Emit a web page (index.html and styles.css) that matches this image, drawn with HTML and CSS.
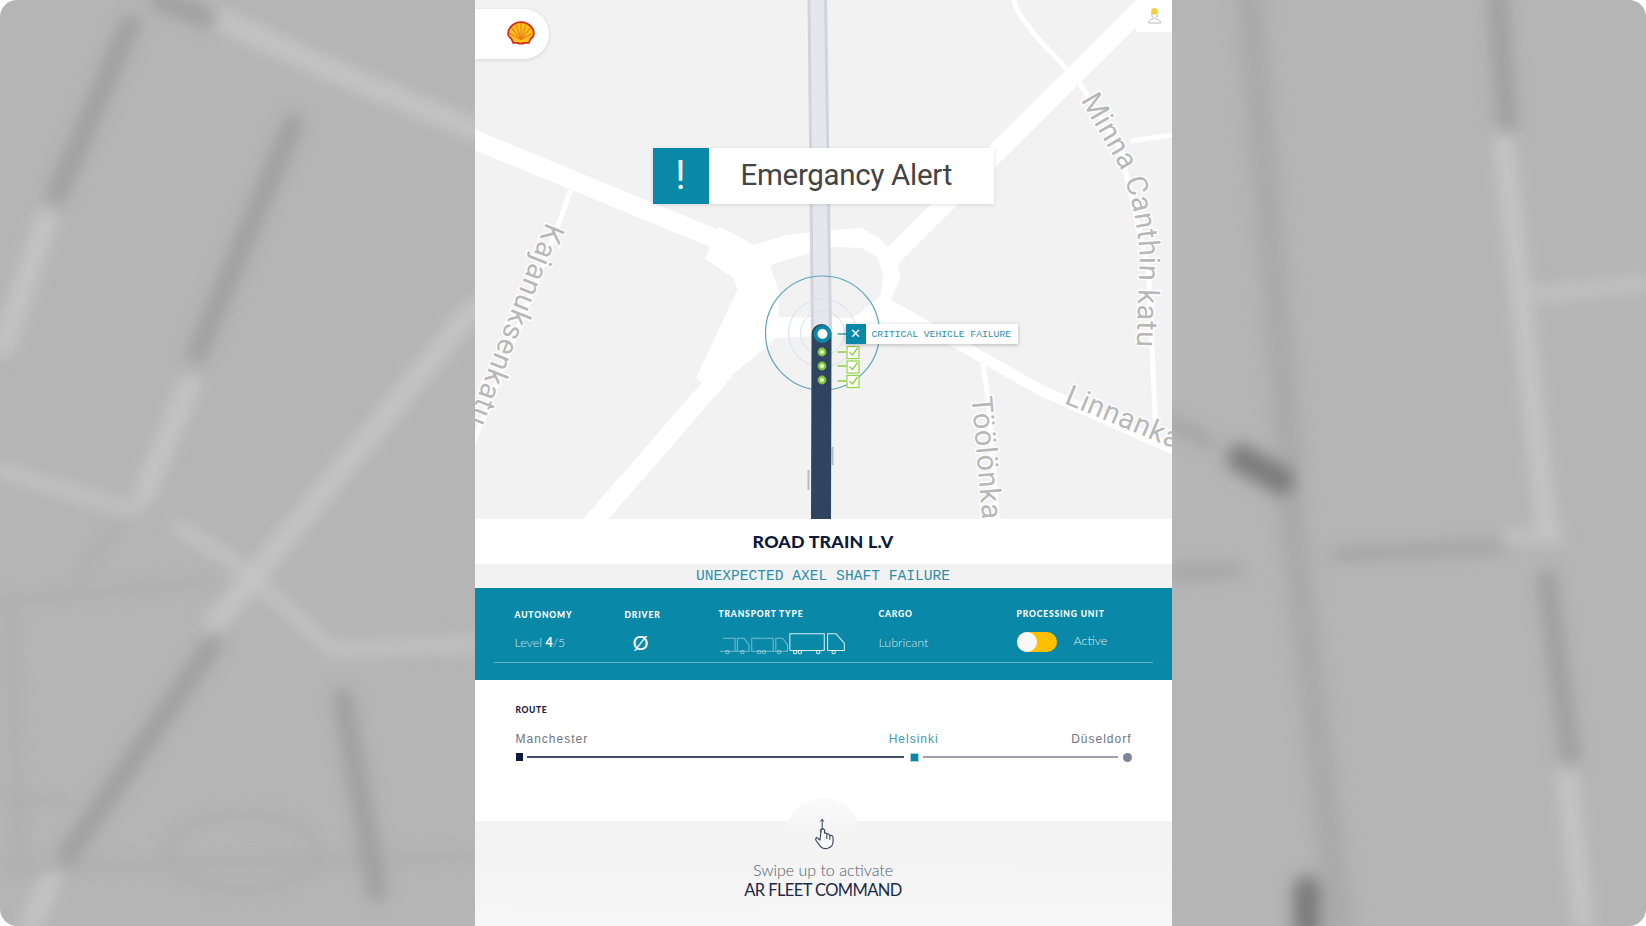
FILE: index.html
```html
<!DOCTYPE html>
<html lang="en">
<head>
    <meta charset="UTF-8">
    <meta name="viewport" content="width=device-width, initial-scale=1.0">
    <title>Road Train Alert</title>
    <link rel="stylesheet" href="styles.css">
</head>
<body>
    <!-- blurred map behind the phone panel -->
    <svg class="backdrop" viewBox="0 0 1646 926" aria-hidden="true">
        <g class="bg-light">
            <path d="M217 18 L333 71 L475 130"/>
            <path d="M47 218 L3 348"/>
            <path d="M190 384 L143 496"/>
            <path class="thin" d="M0 470 L133 511"/>
            <path d="M475 307 L213 626"/>
            <path class="thin" d="M177 526 L233 561 L333 650 L475 644"/>
            <path d="M53 874 L30 926"/>
            <path d="M1503 136 L1547 532"/>
            <path class="thin" d="M1537 295 L1646 283"/>
            <path class="thin" d="M1503 537 L1560 537"/>
            <path d="M1567 774 L1583 921"/>
        </g>
        <g class="bg-faint">
            <path d="M0 602 L207 582"/>
            <path d="M117 526 L77 579"/>
            <path d="M10 608 L20 862"/>
            <path d="M0 868 L475 856"/>
            <ellipse cx="243" cy="852" rx="75" ry="38"/>
            <path d="M0 800 L60 800"/>
            <path class="wide" d="M1250 0 L1290 460"/>
            <path class="wide" d="M1290 500 L1340 926"/>
        </g>
        <g class="bg-dark">
            <path d="M160 0 L207 18"/>
            <path d="M130 24 L57 195"/>
            <path d="M293 124 L197 354"/>
            <path d="M213 644 L67 856"/>
            <path d="M343 697 L377 892"/>
            <path d="M1498 0 L1507 124"/>
            <path d="M1547 579 L1570 756"/>
            <path class="thin" d="M1337 555 L1500 546"/>
            <path class="thin" d="M1172 573 L1237 570"/>
            <path class="thin" d="M1172 422 L1210 443"/>
        </g>
        <path class="bg-truck" d="M1241 458 L1282 481"/>
        <path class="bg-truck" d="M1307 890 L1307 926"/>
    </svg>

    <main class="panel">
        <section class="map">
            <svg class="map-art" viewBox="474.5 0 697 519" aria-hidden="true">
                <g class="road">
                    <path d="M470 138 L725 243"/>
                    <path d="M887 261 L1139 10 L1180 -30"/>
                    <path d="M725 370 L590 525"/>
                </g>
                <path class="road-fill" d="M720 229 L753 247 L787 237 L833 232 L860 230 L878 240 L895 260 L898 277 L888 300 L918 325 L913 343 L860 340 L840 333 L775 336 L753 355 L710 390 L698 377 L739 290 L735 277 L707 258 Z"/>
                <path class="island" d="M773 267 L810 256 L833 250 L861 251 L874 259 L880 277 L877 295 L861 308 L851 315 L781 314 L781 290 Z"/>
                <g class="road-thin">
                    <path d="M1013 0 L1018 13 L1036 37 L1077 80 L1120 150 L1148 270 L1155 425"/>
                    <path d="M1172 135 L1130 141"/>
                    <path d="M570 190 L556 230 L470 450"/>
                    <path d="M982 363 L988 400 L997 525"/>
                </g>
                <path class="road-mid" d="M892 307 L1040 390 L1180 452"/>

                <path id="minnaPath" class="guide" d="M1080 100 L1118 165 C1134 200 1139 240 1139 262 L1135 380"/>
                <path id="kajaPath" class="guide" d="M546 222 C520 285 490 365 440 490"/>
                <path id="toolonPath" class="guide" d="M971 397 L988 590"/>
                <path id="linnanPath" class="guide" d="M1063 403 L1230 472"/>
                <text class="street"><textPath href="#minnaPath">Minna Canthin katu</textPath></text>
                <text class="street"><textPath href="#kajaPath">Kajanuksenkatu</textPath></text>
                <text class="street"><textPath href="#toolonPath">Töölönkatu</textPath></text>
                <text class="street"><textPath href="#linnanPath">Linnankatu</textPath></text>
                <path class="label-bit" d="M808 470 L808 490 M832 447 L832 465 M812 505 L812 518"/>

                <!-- route track -->
                <polygon class="track" points="807.5,0 826,0 831,334 811,334"/>
                <path class="track-edge" d="M808.5 0 L812 334 M825 0 L830 334"/>
                <circle class="radar" cx="822" cy="333" r="57"/>
                <circle class="radar-faint" cx="822" cy="333" r="34"/>
                <circle class="radar-faint" cx="822" cy="333" r="22"/>
                <path class="track-done" d="M811 334 A10 10 0 0 1 831 334 L830.5 519 L810.5 519 Z"/>
                <circle class="stop-main" cx="822" cy="334" r="7"/>
                <g class="stop-ok">
                    <circle cx="821.5" cy="352" r="3.2"/>
                    <circle cx="821.5" cy="366" r="3.2"/>
                    <circle cx="821.5" cy="380" r="3.2"/>
                </g>
                <path class="link-alert" d="M837 334 L846 334"/>
                <g class="link-ok">
                    <path d="M837 352 L846 352 M837 366 L846 366 M837 381 L846 381"/>
                    <rect x="846.5" y="346.5" width="12" height="12"/>
                    <rect x="846.5" y="361" width="12" height="12"/>
                    <rect x="846.5" y="375.5" width="12" height="12"/>
                    <path d="M849 352 L852 355 L857 348 M849 366.5 L852 369.5 L857 362.5 M849 381 L852 384 L857 377"/>
                </g>
            </svg>

            <div class="brand-tab">
                <svg class="shell-logo" viewBox="0 0 27 23" aria-label="Shell">
                    <path class="shell-body" d="M13.5 1 C6.5 1 1 6.5 1 12.5 C1 15 3 16 4.2 17 L6 21 L10 21 Q13.5 22.6 17 21 L21 21 L22.8 17 C24 16 26 15 26 12.5 C26 6.5 20.5 1 13.5 1 Z"/>
                    <path class="shell-rays" d="M13.5 18 L13.5 2 M13.5 18 L8.5 3 M13.5 18 L18.5 3 M13.5 18 L4.5 6.5 M13.5 18 L22.5 6.5 M13.5 18 L2 11.5 M13.5 18 L25 11.5"/>
                </svg>
            </div>

            <div class="user-tab">
                <svg class="user-icon" viewBox="0 0 16 18" aria-label="Driver">
                    <path class="user-outline" d="M5 8 Q5.5 11 7 11.5 L7 12.5 Q1.5 13.5 1.5 17 L14.5 17 Q14.5 13.5 9 12.5 L9 11.5 Q10.5 11 11 8"/>
                    <path class="user-helmet" d="M4.5 8 L4.5 5 Q4.5 1 8 1 Q11.5 1 11.5 5 L11.5 8 Z"/>
                </svg>
            </div>

            <div class="alert">
                <span class="alert-mark">!</span>
                <span class="alert-text">Emergancy Alert</span>
            </div>

            <div class="failure-tag">
                <span class="failure-mark">✕</span>
                <span class="failure-text">CRITICAL VEHICLE FAILURE</span>
            </div>
        </section>

        <header class="vehicle-name">ROAD TRAIN L.V</header>
        <div class="vehicle-status">UNEXPECTED AXEL SHAFT FAILURE</div>

        <section class="specs">
            <div class="specs-row">
                <div class="spec spec-autonomy">
                    <h2>AUTONOMY</h2>
                    <p>Level <b>4</b>/5</p>
                </div>
                <div class="spec spec-driver">
                    <h2>DRIVER</h2>
                    <p class="no-driver">Ø</p>
                </div>
                <div class="spec spec-transport">
                    <h2>TRANSPORT TYPE</h2>
                    <svg class="trucks" viewBox="60 95 380 68" aria-label="Road train">
                        <g class="truck-dim">
                            <path d="M62 152 L152 152 M72 113 L108 113 L108 152 M115 152 L115 113 L135 113 L150 133 L150 152"/>
                            <circle cx="85" cy="155" r="5"/>
                            <circle cx="130" cy="155" r="5"/>
                            <path d="M158 152 L158 113 L222 113 L222 152 Z M230 152 L230 113 L250 113 L265 133 L265 152 L158 152"/>
                            <circle cx="180" cy="155" r="5"/>
                            <circle cx="195" cy="155" r="5"/>
                            <circle cx="240" cy="155" r="5"/>
                        </g>
                        <g class="truck-main">
                            <path d="M272 150 L272 100 L375 100 L375 150 L272 150 M385 150 L385 100 L410 100 L435 128 L435 150 L385 150"/>
                            <circle cx="288" cy="155" r="5"/>
                            <circle cx="302" cy="155" r="5"/>
                            <circle cx="357" cy="155" r="5"/>
                            <circle cx="403" cy="155" r="5"/>
                        </g>
                    </svg>
                </div>
                <div class="spec spec-cargo">
                    <h2>CARGO</h2>
                    <p>Lubricant</p>
                </div>
                <div class="spec spec-unit">
                    <h2>PROCESSING UNIT</h2>
                    <div class="unit-state">
                        <span class="toggle"><span class="toggle-knob"></span></span>
                        <span class="unit-label">Active</span>
                    </div>
                </div>
            </div>
        </section>

        <section class="route">
            <h2>ROUTE</h2>
            <div class="route-cities">
                <span class="city">Manchester</span>
                <span class="city city-current">Helsinki</span>
                <span class="city">Düseldorf</span>
            </div>
            <div class="route-line">
                <span class="node node-start"></span>
                <span class="leg leg-done"></span>
                <span class="node node-current"></span>
                <span class="leg leg-next"></span>
                <span class="node node-end"></span>
            </div>
        </section>

        <footer class="swipe">
            <svg class="swipe-icon" viewBox="100 80 70 100" aria-hidden="true">
                <path class="swipe-arrow" d="M125 116 L125 90 M120 94 L125 86 L130 94"/>
                <circle class="swipe-ring" cx="126" cy="122" r="7"/>
                <path class="swipe-hand" d="M118 150 L108 142 Q102 146 108 154 L122 172 Q130 178 142 175 Q158 170 158 155 L158 141 Q155 133 148 137 Q146 129 139 132 Q137 126 132 129 L132 120 Q128 113 122 119 Z M139 132 L139 147 M148 137 L148 149"/>
            </svg>
            <p class="swipe-hint">Swipe up to activate</p>
            <p class="swipe-title">AR FLEET COMMAND</p>
        </footer>
    </main>
</body>
</html>
```

FILE: styles.css
```css
html, body {
    height: 100%;
    margin: 0;
    background-color: #fff;
    overflow: hidden;
}
body {
    display: flex;
    justify-content: center;
    font-family: "Lato", "Liberation Sans", sans-serif;
}
h2, p {
    margin: 0;
}

/* blurred backdrop */
.backdrop {
    position: absolute;
    left: 0;
    top: 0;
    width: 1646px;
    height: 926px;
    background-color: #b5b5b5;
    border-radius: 17px;
}
.backdrop g, .bg-truck {
    fill: none;
    stroke-linecap: round;
    filter: blur(8px);
}
.bg-light {
    stroke: #c6c6c6;
    stroke-width: 19;
}
.bg-light .thin {
    stroke-width: 11;
}
.bg-faint {
    stroke: #aaa;
    stroke-width: 6;
}
.bg-faint .wide {
    stroke-width: 28;
}
.bg-dark {
    stroke: #9e9e9e;
    stroke-width: 19;
}
.bg-dark .thin {
    stroke-width: 10;
}
.bg-truck {
    stroke: #7c7c7c;
    stroke-width: 28;
}

/* phone panel */
.panel {
    position: relative;
    width: 697px;
    height: 926px;
    background-color: #fff;
    display: flex;
    flex-direction: column;
}

/* map */
.map {
    position: relative;
    height: 519px;
    background-color: #f2f2f2;
    overflow: hidden;
}
.map-art {
    display: block;
    width: 697px;
    height: 519px;
}
.road path {
    fill: none;
    stroke: #fff;
    stroke-width: 19;
}
.road-fill {
    fill: #fff;
    stroke: #fff;
    stroke-width: 4;
    stroke-linejoin: round;
}
.island {
    fill: #f2f2f2;
    stroke: #f2f2f2;
    stroke-width: 6;
    stroke-linejoin: round;
}
.road-thin path {
    fill: none;
    stroke: #fff;
    stroke-width: 5;
}
.road-mid {
    fill: none;
    stroke: #fff;
    stroke-width: 11;
}
.guide {
    fill: none;
}
.street {
    font-family: "Roboto", sans-serif;
    font-size: 29px;
    letter-spacing: 0.6px;
    fill: #b8b8b8;
    stroke: #fff;
    stroke-width: 3px;
    paint-order: stroke;
}
.label-bit {
    fill: none;
    stroke: #bbb;
    stroke-width: 2;
}
.track {
    fill: #e6e7ed;
}
.track-edge {
    fill: none;
    stroke: #d2d3dd;
    stroke-width: 3;
}
.radar {
    fill: none;
    stroke: #5aa3b9;
    stroke-width: 1.2;
}
.radar-faint {
    fill: none;
    stroke: #d5e2e8;
    stroke-width: 1;
}
.track-done {
    fill: #2f4460;
}
.stop-main {
    fill: #fff;
    stroke: #0a88a8;
    stroke-width: 4;
}
.stop-ok circle {
    fill: #eef9d8;
    stroke: #7fc93a;
    stroke-width: 2.4;
}
.link-alert {
    stroke: #3c97b2;
    stroke-width: 1.5;
}
.link-ok path {
    fill: none;
    stroke: #8ccf3f;
    stroke-width: 1.3;
}
.link-ok rect {
    fill: #fff;
    stroke: #94d24a;
    stroke-width: 1.2;
}
.brand-tab {
    position: absolute;
    left: 0;
    top: 9px;
    width: 74px;
    height: 50px;
    background-color: #fff;
    border-radius: 0 25px 25px 0;
    box-shadow: 0 1px 4px rgba(0,0,0,0.12);
}
.shell-logo {
    position: absolute;
    left: 32px;
    top: 12px;
    width: 28px;
    height: 24px;
}
.shell-body {
    fill: #fbc21c;
    stroke: #d8281c;
    stroke-width: 1.7;
}
.shell-rays {
    fill: none;
    stroke: #ec7b18;
    stroke-width: 1;
}
.user-tab {
    position: absolute;
    right: 0;
    top: 0;
    width: 36px;
    height: 32px;
    background-color: #fff;
}
.user-icon {
    position: absolute;
    left: 11px;
    top: 7px;
    width: 15px;
    height: 17px;
}
.user-outline {
    fill: #fff;
    stroke: #b5b5b5;
    stroke-width: 1;
}
.user-helmet {
    fill: #f4cf3b;
}
.alert {
    position: absolute;
    left: 178px;
    top: 148px;
    width: 341px;
    height: 56px;
    display: flex;
    align-items: center;
    background-color: #fff;
    box-shadow: 0 1px 4px rgba(0,0,0,0.12);
}
.alert-mark {
    width: 56px;
    height: 56px;
    line-height: 56px;
    text-align: center;
    background-color: #0a88a8;
    color: #fff;
    font-family: "Roboto", sans-serif;
    font-weight: 400;
    font-size: 40px;
}
.alert-text {
    margin-left: 32px;
    margin-top: -2px;
    font-family: "Roboto", sans-serif;
    font-size: 29.5px;
    font-weight: 400;
    letter-spacing: -0.3px;
    color: #444;
}
.failure-tag {
    position: absolute;
    left: 371px;
    top: 324px;
    height: 20px;
    width: 172px;
    display: flex;
    align-items: center;
    background-color: #fff;
    box-shadow: 0 1px 4px rgba(0,0,0,0.25);
}
.failure-mark {
    width: 20px;
    height: 20px;
    line-height: 20px;
    text-align: center;
    background-color: #0a88a8;
    color: #fff;
    font-family: "DejaVu Sans", sans-serif;
    font-size: 13px;
    font-weight: bold;
}
.failure-text {
    margin-left: 6px;
    font-family: "Liberation Mono", monospace;
    font-size: 9.7px;
    color: #2f8ea8;
    white-space: nowrap;
}

/* vehicle heading */
.vehicle-name {
    height: 45px;
    line-height: 45px;
    text-align: center;
    font-weight: 900;
    font-size: 17.8px;
    letter-spacing: 0.2px;
    color: #0e1a3c;
}
.vehicle-status {
    height: 24px;
    line-height: 24px;
    text-align: center;
    background-color: #f2f2f2;
    font-family: "Liberation Mono", monospace;
    font-size: 14.6px;
    color: #2f8ea8;
}

/* teal info block */
.specs {
    height: 92px;
    box-sizing: border-box;
    padding: 0 19px;
    background-color: #0a88a8;
    color: #fff;
}
.specs-row {
    display: flex;
    height: 74px;
    padding-left: 21px;
    border-bottom: 1px solid rgba(255,255,255,0.35);
}
.spec {
    box-sizing: border-box;
    padding-top: 21px;
}
.spec h2 {
    font-size: 8.5px;
    font-weight: 900;
    letter-spacing: 0.85px;
    line-height: 10px;
    white-space: nowrap;
}
.spec p {
    margin-top: 15px;
    font-size: 12.5px;
    font-weight: 300;
    line-height: 16px;
    color: rgba(255,255,255,0.8);
}
.spec p b {
    font-weight: 700;
    color: #fff;
}
.spec-autonomy {
    width: 110px;
    padding-top: 22px;
}
.spec-driver {
    width: 94px;
    padding-top: 22px;
}
.spec-transport {
    width: 160px;
}
.spec-cargo {
    width: 138px;
}
.spec-unit {
    flex: 1;
}
.spec p.no-driver {
    margin-top: 12px;
    padding-left: 8px;
    font-size: 20px;
    font-weight: 400;
    line-height: 20px;
    color: #fff;
}
.spec-cargo p {
    margin-top: 16px;
}
.trucks {
    display: block;
    width: 127px;
    height: 23px;
    margin-top: 13px;
}
.trucks path, .trucks circle {
    fill: none;
    stroke-width: 3;
}
.truck-dim path, .truck-dim circle {
    stroke: rgba(255,255,255,0.45);
}
.truck-main path, .truck-main circle {
    stroke: rgba(255,255,255,0.85);
}
.unit-state {
    display: flex;
    align-items: center;
    margin-top: 13px;
}
.toggle {
    position: relative;
    width: 40px;
    height: 20px;
    border-radius: 10px;
    background-color: #fdbf00;
}
.toggle-knob {
    position: absolute;
    left: 0;
    top: 0;
    width: 20px;
    height: 20px;
    border-radius: 50%;
    background-color: #f8f8f8;
}
.unit-label {
    margin-left: 17px;
    margin-top: -3px;
    font-size: 12.5px;
    font-weight: 300;
    color: rgba(255,255,255,0.9);
}

/* route */
.route {
    height: 141px;
    box-sizing: border-box;
    padding: 25px 40px 0 41px;
}
.route h2 {
    font-size: 8.5px;
    font-weight: 900;
    letter-spacing: 0.6px;
    line-height: 10px;
    color: #17223f;
}
.route-cities {
    position: relative;
    display: flex;
    justify-content: space-between;
    margin-top: 16px;
    font-family: "Liberation Sans", sans-serif;
    font-size: 12px;
    letter-spacing: 1px;
    line-height: 16px;
    color: #6d7482;
}
.city-current {
    position: relative;
    left: 84px;
    color: #3f9ab3;
}
.route-line {
    display: flex;
    align-items: center;
    height: 12px;
    margin-top: 4px;
}
.node {
    flex: none;
}
.node-start {
    width: 7px;
    height: 8px;
    background-color: #0e1a3c;
}
.node-current {
    width: 7px;
    height: 7px;
    background-color: #0a88a8;
    border: 1.5px solid #a9d4e0;
}
.node-end {
    width: 9px;
    height: 9px;
    border-radius: 50%;
    background-color: #7d8599;
}
.leg {
    height: 2px;
}
.leg-done {
    width: 377px;
    margin: 0 6px 0 4px;
    background-color: #3e4e6b;
}
.leg-next {
    flex: 1;
    margin: 0 5px 0 4px;
    background-color: #9da1b0;
}

/* swipe footer */
.swipe {
    position: relative;
    flex: 1;
    text-align: center;
    background: linear-gradient(#f3f3f4, #f6f6f6);
}
.swipe::before {
    content: "";
    position: absolute;
    left: 50%;
    top: -23px;
    width: 76px;
    height: 38px;
    margin-left: -38px;
    border-radius: 38px 38px 0 0;
    background: linear-gradient(#fbfbfb, #f3f3f4);
}
.swipe-icon {
    position: absolute;
    left: 50%;
    top: -4px;
    width: 23px;
    height: 33px;
    margin-left: -9px;
}
.swipe-arrow {
    fill: none;
    stroke: #2f3e58;
    stroke-width: 3;
}
.swipe-ring {
    fill: #8a94a6;
    stroke: #3b4a63;
    stroke-width: 2.5;
}
.swipe-hand {
    fill: #fafafa;
    stroke: #3b4a63;
    stroke-width: 3.5;
    stroke-linejoin: round;
}
.swipe-hint {
    padding-top: 39px;
    font-size: 16px;
    font-weight: 300;
    line-height: 20px;
    color: #535c6c;
}
.swipe-title {
    font-size: 16.5px;
    font-weight: 400;
    line-height: 20px;
    letter-spacing: -0.6px;
    color: #1c2a46;
}
```
